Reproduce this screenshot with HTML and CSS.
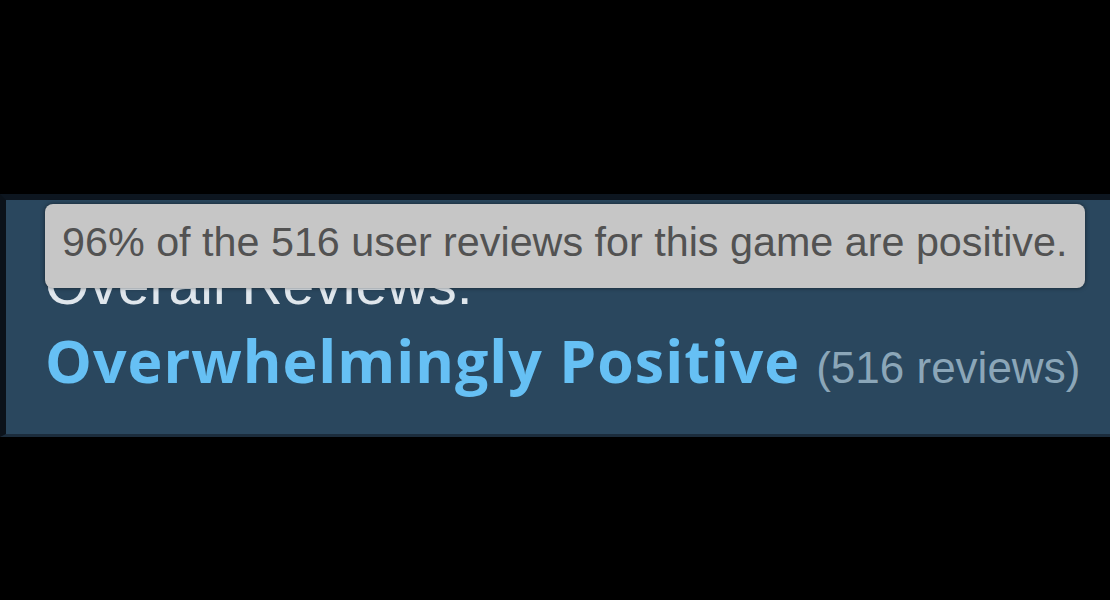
FILE: index.html
```html
<!DOCTYPE html>
<html lang="en">
  <head>
    <meta charset="UTF-8" />
    <meta name="viewport" content="width=device-width, initial-scale=1.0" />
    <title>Overall Reviews</title>
    <link rel="stylesheet" href="styles.css">
  </head>

  <body>
    <div class="review-panel">
      <div class="subtitle">Overall Reviews:</div>
      <div class="summary">
        <span class="summary-label">Overwhelmingly Positive</span>
        <span class="summary-count">(516 reviews)</span>
      </div>

      <!-- Hover tooltip -->
      <div class="tooltip">96% of the 516 user reviews for this game are positive.</div>
    </div>
  </body>
</html>
```

FILE: styles.css
```css
body {
  margin: 0;
  background-color: #000;
  font-family: "Liberation Sans", Arial, sans-serif;
}

.review-panel {
  position: relative;
  margin-top: 194px;
  height: 182px;
  background-color: #2a475e;
  border-top: 6px solid #0d1620;
  border-left: 6px solid #0b121a;
  border-bottom: 3px solid #1b2c3c;
  padding: 52px 0 0 39px;
}

.subtitle {
  color: #dfe6ec;
  font-size: 57px;
  line-height: 64px;
}

.summary {
  display: flex;
  align-items: baseline;
  gap: 16px;
  margin-top: 4px;
}

.summary-label {
  color: #66c0f4;
  font-family: "Open Sans", "Noto Sans", sans-serif;
  font-weight: bold;
  font-size: 59px;
  letter-spacing: 1px;
}

.summary-count {
  color: #8ba6b8;
  font-size: 44px;
}

.tooltip {
  position: absolute;
  left: 39px;
  top: 4px;
  width: 1040px;
  height: 84px;
  box-sizing: border-box;
  padding: 14px 0 0 17px;
  background-color: #c6c6c6;
  color: #525252;
  font-size: 41.3px;
  line-height: 48px;
  border-radius: 8px;
  box-shadow: 0 0 4px rgba(0, 0, 0, 0.5);
  white-space: nowrap;
}
```
